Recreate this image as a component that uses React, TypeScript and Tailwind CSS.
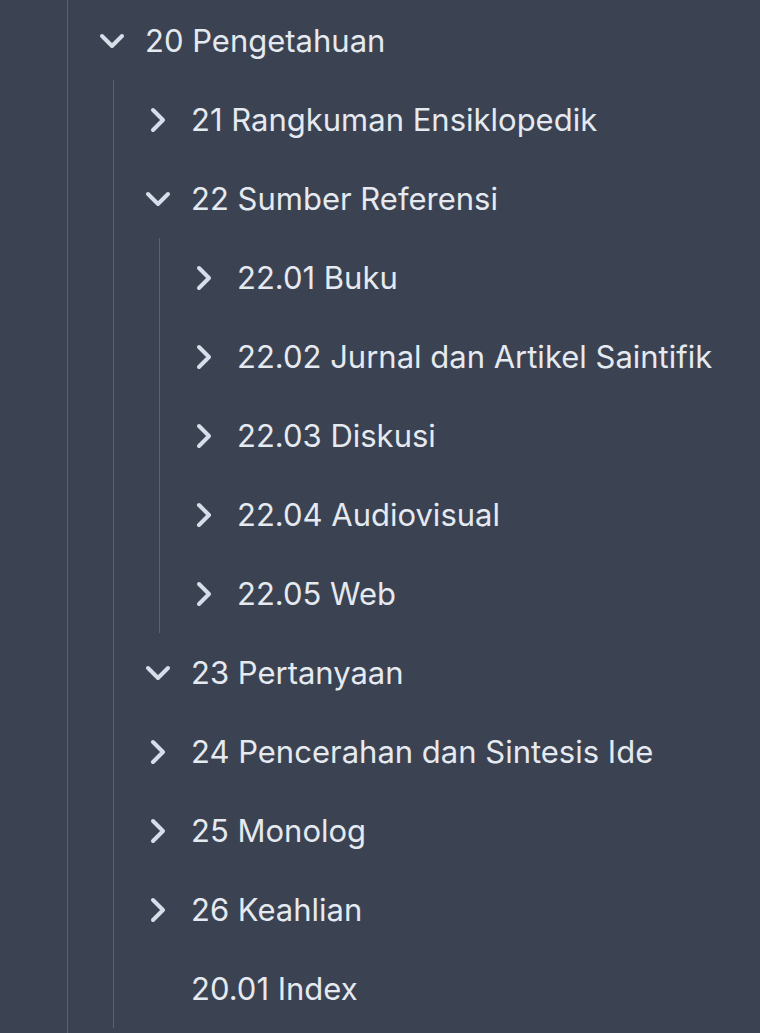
import React from 'react';
import { ChevronDown, ChevronRight } from 'lucide-react';

/* ────────────── Types ────────────── */
interface Node {
  label: string;
  open?: boolean;
  leaf?: boolean;
  children?: Node[];
}

const tree: Node[] = [
  {
    label: '20 Pengetahuan',
    open: true,
    children: [
      { label: '21 Rangkuman Ensiklopedik' },
      {
        label: '22 Sumber Referensi',
        open: true,
        children: [
          { label: '22.01 Buku' },
          { label: '22.02 Jurnal dan Artikel Saintifik' },
          { label: '22.03 Diskusi' },
          { label: '22.04 Audiovisual' },
          { label: '22.05 Web' },
        ],
      },
      { label: '23 Pertanyaan', open: true },
      { label: '24 Pencerahan dan Sintesis Ide' },
      { label: '25 Monolog' },
      { label: '26 Keahlian' },
      { label: '20.01 Index', leaf: true },
    ],
  },
];

/* ────────────── Row ────────────── */
function Row({ node }: { node: Node }) {
  return (
    <div>
      <div className="flex items-center h-[79px] whitespace-nowrap">
        <span className="w-10 h-10 flex items-center justify-center shrink-0 text-[#d8dee9]">
          {node.leaf ? null : node.open ? (
            <ChevronDown size={40} strokeWidth={2.4} />
          ) : (
            <ChevronRight size={40} strokeWidth={2.4} />
          )}
        </span>
        <span className="ml-[13px] text-[31px] leading-none text-[#e5e9f0]">{node.label}</span>
      </div>
      {node.open && node.children && (
        <div className="ml-[21px] border-l border-[#596175] pl-6">
          {node.children.map(c => <Row key={c.label} node={c} />)}
        </div>
      )}
    </div>
  );
}

/* ────────────── Main Component ────────────── */
export default function App() {
  return (
    <div
      className="w-[760px] h-[1033px] overflow-hidden bg-[#3b4252]"
      style={{ fontFamily: 'Inter, "Noto Sans", sans-serif' }}
    >
      <div className="ml-[67px] h-full border-l border-[#596175] pl-6 pt-px">
        {tree.map(n => <Row key={n.label} node={n} />)}
      </div>
    </div>
  );
}
